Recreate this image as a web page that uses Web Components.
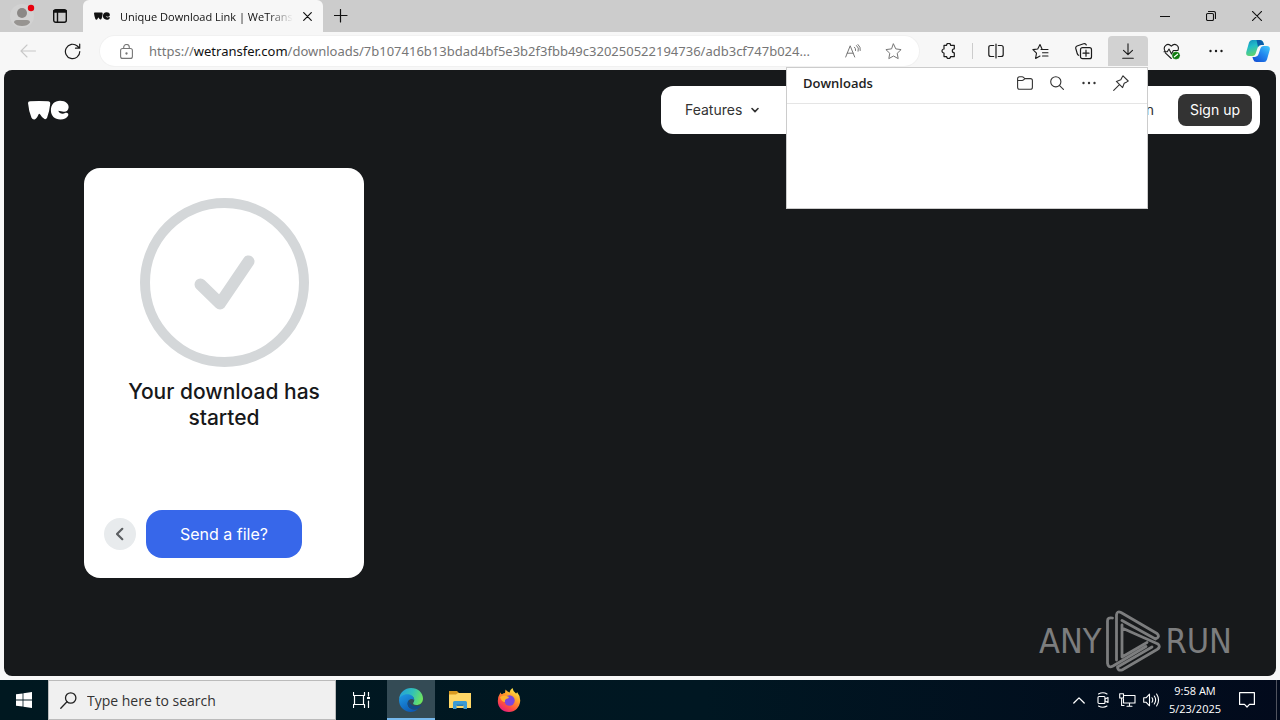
<!DOCTYPE html>
<html lang="en">
<head>
<meta charset="utf-8">
<title>Unique Download Link | WeTransfer</title>
<style>
  html, body { margin: 0; height: 100%; }
  body { font-family: "Open Sans", "Noto Sans", sans-serif; color: #1b1b1b; overflow: hidden; }
</style>
</head>
<body>
<desk-top>
  <tab-strip slot="tabs">Unique Download Link | WeTransfer</tab-strip>
  <tool-bar slot="toolbar"><downloads-panel>Downloads</downloads-panel></tool-bar>
  <web-page slot="page">
    <site-nav slot="nav"></site-nav>
    <download-card>Your download has started</download-card>
    <any-run slot="watermark"></any-run>
  </web-page>
  <task-bar slot="taskbar"></task-bar>
</desk-top>

<script>
const define = (name, html) => customElements.define(name, class extends HTMLElement {
  constructor() {
    super();
    const t = document.createElement('template');
    t.innerHTML = html;
    this.attachShadow({ mode: 'open' }).append(t.content.cloneNode(true));
  }
});

const line = (w, h, body, sw = 1) =>
  `<svg width="${w}" height="${h}" viewBox="0 0 ${w} ${h}" fill="none" stroke="currentColor" stroke-width="${sw}" stroke-linecap="round" stroke-linejoin="round" aria-hidden="true">${body}</svg>`;
const fill = (w, h, body, box) =>
  `<svg width="${w}" height="${h}" viewBox="${box || `0 0 ${w} ${h}`}" fill="currentColor" aria-hidden="true">${body}</svg>`;
const weLogo = '<path d="M0 2.5Q0 .8 2 .8Q11 0 20 .8Q22.500 1 22.200 3.500Q21.500 11 19 17.500Q18 19 16.500 18.500Q14 17.300 12 13.800Q11.200 12.900 10.500 13.900Q8.500 18.500 6.500 18.900Q4.500 19.200 3.500 17.200Q.8 11 0 2.500Z"/><path d="M32 .2C38 .2 41 3.700 40.600 7C40.400 10 38 11.600 35.500 11.200L30.300 10.200C31 12.800 34.500 14 37 12.600C39 11.700 41 13 40.200 15C39 17.500 36 19 32.500 19C26.500 19 22.900 15 22.900 9.700C22.900 4 26.500 .2 32 .2Z"/>';
const star = 'M8.500 1L10.800 5.900L16.100 6.600L12.200 10.300L13.200 15.600L8.500 13L3.800 15.600L4.800 10.300L.9 6.600L6.200 5.900Z';

const ICONS = {
  avatar: fill(26, 28, '<circle cx="12" cy="14" r="12" fill="#d2d2d2"/><circle cx="12" cy="11" r="5" fill="#8b8886"/><path d="M4 20.500Q4 18 7 18H17Q20 18 20 20.500Q17.500 24 12 24T4 20.500Z" fill="#979491"/><circle cx="21" cy="6" r="3.200" fill="#e8000d"/>'),
  workspaces: line(14, 14, '<rect x=".7" y=".7" width="12.600" height="12.600" rx="2"/><path d="M.7 3H13.300M4.500 3.500V13" /><path d="M1 2H13" stroke-width="2"/>', 1.4),
  we: fill(16, 8, weLogo, '0 0 41 19'),
  logo: fill(41, 20, weLogo, '0 0 41 19'),
  close: line(9, 9, '<path d="M.7 .7L8.300 8.300M8.300 .7L.7 8.300"/>', 1.2),
  plus: line(14, 14, '<path d="M6.500 .5V13M.5 6.500H13"/>', 1.2),
  min: line(10, 10, '<path d="M0 5.500H10"/>'),
  restore: line(10, 10, '<rect x=".5" y="2.500" width="7" height="7" rx="1.200"/><path d="M2.500 .5H7.500Q9.500 .5 9.500 2.500V7.500"/>', 1.1),
  closewin: line(10, 10, '<path d="M.3 .3L9.700 9.700M9.700 .3L.3 9.700"/>', 1.1),
  back: line(16, 14, '<path d="M15.500 7H1M7 1L1 7L7 13"/>', 1.1),
  refresh: line(17, 17, '<path d="M15.800 8.500A7.200 7.200 0 1 1 13.300 3L15.700 5.200M15.700 1V5.200H11.500"/>', 1.2),
  lock: line(13, 15, '<rect x=".6" y="4.500" width="11.800" height="9.900" rx="2"/><path d="M3.700 4.500V3.300A2.800 2.800 0 0 1 9.300 3.300V4.500"/><circle cx="6.500" cy="9.500" r=".6" fill="currentColor"/>', 1.1),
  read: line(16, 14, '<path d="M.7 13L5.200 1.800L9.700 13M2.200 9.200H8.200M9.500 3.200Q11 4.500 10.600 6.500M11.500 1.500Q14.500 3.800 13.200 7.200M13 .5Q16 3 15.300 6.500"/>'),
  star: line(17, 17, `<path d="${star}"/>`),
  puzzle: line(16, 16, '<path d="M4 2.300H5.600A2 2 0 0 1 9.600 2.300H13.300V5.800A2 2 0 0 0 13.300 9.800V13.600H9.600A2 2 0 0 1 5.600 13.600H3V10A2 2 0 0 1 3 6V2.300Z"/>', 1.2),
  split: line(16, 16, '<path d="M5.700 2.500H2.800Q.8 2.500 .8 4.500V11.500Q.8 13.500 2.800 13.500H5.700M10.300 2.500H13.200Q15.200 2.500 15.200 4.500V11.500Q15.200 13.500 13.200 13.500H10.300M8 1V15"/>', 1.2),
  favs: line(17, 17, '<path d="M10 6L8 1.500L5.700 6L.9 6.600L4.500 10.200L3.600 15.400L8 13M9 6.500H16M10.500 9.700H16M10.500 13H16"/>', 1.1),
  collections: line(18, 17, '<rect x="5.500" y="4.700" width="11" height="11" rx="2"/><path d="M11 7.200V13.200M8 10.200H14M3.700 12.300Q2.700 12 2.300 10.800L.8 5.500Q.4 3.700 2 3L8.600 .8Q10.600 .2 11.300 2"/>', 1.2),
  download: line(12, 16, '<path d="M6 .7V11.500M1.500 7.300L6 11.700L10.500 7.300M.7 15.200H11.300"/>', 1.1),
  heart: line(18, 17, '<path d="M2 8C-.5 3.500 4.500-1 8.300 3.200C12-1 17 3.200 14.800 7.500M2.300 9.800L8.300 15.500M1 8.800H4.300L6 6L8.500 11L10.300 7.500H15"/><circle cx="13" cy="12.500" r="3.600" fill="#107c10" stroke="#107c10" stroke-width=".6"/><path d="M11.400 13.800L14.600 11.200" stroke="#fff" stroke-width="1.100"/>', 1.1),
  more: fill(14, 4, '<circle cx="1.500" cy="2" r="1.200"/><circle cx="7" cy="2" r="1.200"/><circle cx="12.500" cy="2" r="1.200"/>'),
  copilot: fill(24, 22, '<defs><linearGradient id="a" x1="0" y1="0" x2=".4" y2="1"><stop stop-color="#128bbd"/><stop offset=".45" stop-color="#22bdc8"/><stop offset="1" stop-color="#64d568"/></linearGradient><linearGradient id="b" x1="1" y1="0" x2=".2" y2="1"><stop stop-color="#43cdfb"/><stop offset=".5" stop-color="#2389ef"/><stop offset="1" stop-color="#1453d6"/></linearGradient></defs><path fill="url(#a)" d="M6 0H14Q16.500 0 17.300 2.500L18 5H15Q12.500 5 11.600 7.800L9.500 14Q8.700 16 6.500 16H3Q-.5 16 .3 12L3 2.500Q3.800 0 6 0Z"/><path fill="url(#b)" d="M18 22H10.500Q8 22 7.200 19.500L6.400 17H9Q11.500 17 12.500 14.200L14.600 8Q15.400 6 17.600 6H21Q24.500 6 23.700 10L21 19.500Q20.200 22 18 22Z"/><path fill="#0a5ca8" d="M14 0Q16.500 0 17.300 2.500L18 5H15Q13 5 12 7L10.500 0Z"/>'),
  folder: line(16, 14, '<path d="M.6 3Q.6 .8 2.600 .8H5Q6 .8 6.800 1.600L8 2.600H13.400Q15.400 2.600 15.400 4.600V11.200Q15.400 13.300 13.400 13.300H2.600Q.6 13.300 .6 11.200ZM.8 4.500H5Q6 4.500 6.800 3.700L8 2.600"/>', 1.1),
  search: line(14, 14, '<circle cx="5.800" cy="5.800" r="5.100"/><path d="M9.600 9.600L13.400 13.400"/>', 1.1),
  pin: line(16, 16, '<path d="M10 .8L15.200 6L13.800 6.900L11.200 8.200L9.600 12.600L3.400 6.400L7.800 4.800L9.100 2.200ZM6.200 9.800L.7 15.300"/>', 1.1),
  chev: line(8, 6, '<path d="M1 1.500L4 4.600L7 1.500"/>', 1.6),
  check: fill(169, 169, '<circle cx="84.500" cy="84.500" r="79.500" fill="none" stroke="#d4d7d9" stroke-width="10"/><path d="M60.500 86.500L80 105.500L108.500 63.500" fill="none" stroke="#d4d7d9" stroke-width="12" stroke-linecap="round" stroke-linejoin="round"/>'),
  left: line(11, 14, '<path d="M7.300 1.800L2 7L7.300 12.200"/>', 2.2),
  play: line(56, 62, '<path d="M7.500 8Q2.500 7 2.500 11V53Q3 58.500 8 56L41 36.500M11.500 50V5Q12 .5 16 2.500L52 23.500Q55.500 27 50.500 29L17 10.500M17 15V47L42 32.500M17 18L53 34Q56 37 52 39.500L17 60Q12.500 61 12.500 57L47 37"/>', 2.8),
  windows: fill(16, 16, '<path d="M0 2.300L6.600 1.400V7.600H0ZM7.400 1.300L16 0V7.600H7.400ZM0 8.400H6.600V14.600L0 13.700ZM7.400 8.400H16V16L7.400 14.700Z"/>'),
  tasksearch: line(17, 17, '<circle cx="10.700" cy="6" r="5.200"/><path d="M7 9.800L.8 16.200"/>', 1.3),
  taskview: line(17, 16, '<path d="M.5 .5V3.500H11.500V.5M.5 15.500V12.500H11.500V15.500M1.500 4V12.500M10.500 4V12.500M15.500 .5V4M15.500 9V15.500"/><path d="M15.500 5V7" stroke-width="3" stroke-linecap="butt"/>', 1.2),
  edge: fill(24, 24, '<defs><linearGradient id="c" x1="0" y1=".3" x2="1" y2=".6"><stop stop-color="#249fdc"/><stop offset=".5" stop-color="#31c0b8"/><stop offset="1" stop-color="#70e65b"/></linearGradient><linearGradient id="d" x1="0" y1="0" x2=".6" y2="1"><stop stop-color="#1f9ae5"/><stop offset="1" stop-color="#0d5ab5"/></linearGradient></defs><path fill="url(#c)" d="M0 11C1 4 6 0 12 0C19 0 24 4.800 24 10.500C24 15 20.500 17 17.500 17C14.500 17 13.700 15.700 14.300 14.800C16.500 12 15 8 10.500 7.500C5.500 7 1.500 9 0 11Z"/><path fill="url(#d)" d="M0 12C.3 8 5 5.700 9.500 6.200C13 6.600 15.500 9.500 15 12C13 9.800 8.500 11.500 8.500 15.500C8.500 20 13.500 23 19 21C15 25 8.500 25 4 21C1 18.500 0 15 0 12Z"/><path fill="#114a8b" d="M9.800 12.200C7 16 10 21.500 16 21.200Q20 21 22.300 17.500Q22.500 17 21.800 17.300C17 19.600 10.500 18 9.800 12.200Z"/>'),
  explorer: fill(22, 18, '<path fill="#d99a20" d="M0 0H8L10 2H21V8H0Z"/><path fill="#ffd766" d="M0 3.500H7L9 2H22V17H0Z"/><path fill="#3b9bd4" d="M4 18V11.500Q4 10 5.500 10H16.500Q18 10 18 11.500V18H14.500V14H7.500V18Z"/><path fill="#2a7db5" d="M7.500 13.500H14.500V15H7.500Z"/>'),
  firefox: fill(24, 24, '<defs><linearGradient id="e" x1=".8" y1="0" x2=".2" y2="1"><stop stop-color="#fff44f"/><stop offset=".35" stop-color="#ffa52a"/><stop offset=".7" stop-color="#ff4f3e"/><stop offset="1" stop-color="#e31587"/></linearGradient></defs><path fill="url(#e)" d="M3.500 4.500Q4 6 5 6.200Q6.500 5 8 5L8.500 1.500Q10 3.500 12.500 4.500Q13 1.500 15.500 0Q16 3.500 19 5.500Q20 5 20 4Q23.500 8 23.200 13C22.700 19.500 18 24 12 24C5.500 24 .8 19.500 .8 13Q.8 8.500 3.500 4.500Z"/><circle cx="12.500" cy="12.500" r="5.200" fill="#7a46dd"/><path fill="#ffb22c" d="M3 9Q7 6 12 9Q12 10.500 9 11Q7.500 12 8 14Q4.500 14 3 9Z"/>'),
  up: line(12, 7, '<path d="M.8 6L6 .9L11.200 6"/>', 1.3),
  camera: line(12, 16, '<rect x="1" y="4.500" width="7" height="7" rx="1"/><path d="M8 7L11 5.500V10.500L8 9M1.500 2Q6-.5 10 2M1.500 14Q6 16.500 10 14"/>', 1.1),
  network: line(17, 14, '<path d="M5.500 2.500H16V10H4.500V6M8 13.300H13M10.500 10V13M.7 .7H4.500V5H.7ZM2.600 5V12.500H5"/>', 1.1),
  volume: line(17, 14, '<path d="M.7 4.800H3L6.500 1.200V12.800L3 9.200H.7ZM9 4.800Q10.500 7 9 9.200M11.300 3Q14 7 11.300 11M13.600 1Q17.500 7 13.600 13"/>', 1.1),
  notice: line(16, 16, '<path d="M.6 .6H15.400V12.400H10.500L8 15L5.500 12.400H.6Z"/>', 1.2)
};

customElements.define('ui-icon', class extends HTMLElement {
  constructor() { super(); this.attachShadow({ mode: 'open' }); }
  connectedCallback() {
    this.shadowRoot.innerHTML = `<style>:host{display:inline-flex;flex:none}svg{display:block}</style>${ICONS[this.getAttribute('name')] || ''}`;
  }
});

const RESET = 'button,input,a{font:inherit;color:inherit;margin:0;padding:0;border:0;background:none;text-decoration:none}button{display:flex;align-items:center;justify-content:center}input:focus{outline:none}';

define('desk-top', `<style>
  :host{display:flex;flex-direction:column;height:100vh;min-height:480px;background:#f7f7f7}
  ::slotted([slot=page]){flex:1;min-height:0;margin:0 4px 4px}
</style>
<slot name="tabs"></slot><slot name="toolbar"></slot><slot name="page"></slot><slot name="taskbar"></slot>`);

define('tab-strip', `<style>${RESET}
  :host{display:flex;height:32px;flex:none;background:#ccc;font-size:11px;color:#111}
  .side{display:flex;align-items:center;width:83px;box-sizing:border-box;padding-left:10px;gap:17px}
  .tab{display:flex;align-items:center;box-sizing:border-box;width:240px;background:#f7f7f7;border-radius:6px 6px 0 0;padding:0 6px 0 11px}
  .title{flex:1;min-width:0;margin:0 4px 0 10px;overflow:hidden;white-space:nowrap;-webkit-mask-image:linear-gradient(to right,#000 85%,transparent);mask-image:linear-gradient(to right,#000 85%,transparent)}
  .tab button{width:20px;height:20px}
  .new{width:36px}
  .win{display:flex;margin-left:auto}
  .win button{width:46px}
</style>
<div class="side"><button aria-label="Profile"><ui-icon name="avatar"></ui-icon></button><button aria-label="Workspaces"><ui-icon name="workspaces"></ui-icon></button></div>
<div class="tab"><ui-icon name="we"></ui-icon><span class="title"><slot></slot></span><button aria-label="Close tab"><ui-icon name="close"></ui-icon></button></div>
<button class="new" aria-label="New tab"><ui-icon name="plus"></ui-icon></button>
<div class="win"><button aria-label="Minimize"><ui-icon name="min"></ui-icon></button><button aria-label="Restore"><ui-icon name="restore"></ui-icon></button><button aria-label="Close"><ui-icon name="closewin"></ui-icon></button></div>`);

define('tool-bar', `<style>${RESET}
  :host{display:flex;align-items:center;height:38px;flex:none;box-sizing:border-box;padding:0 4px 0 8px;gap:4px;position:relative;z-index:2;background:#f7f7f7}
  button{width:40px;height:30px;flex:none;border-radius:4px}
  .off{color:#c8c8c8}
  .address{display:flex;align-items:center;flex:1;min-width:0;height:30px;margin:0 6px 0 4px;border-radius:15px;background:#fff;box-shadow:0 0 0 1px #f1f1f1;color:#767676;padding:0 6px 0 20px;box-sizing:border-box}
  .field{display:grid;flex:1;min-width:0;margin-left:16px;font:13px/20px "Noto Sans","Open Sans",sans-serif}
  .field>*{grid-area:1/1;min-width:0}
  .url{overflow:hidden;white-space:nowrap}
  b{font-weight:400;color:#111}
  .sep{width:1px;height:16px;margin:0 -1px;background:#ccc}
  .on{background:#d2d2d2;border-radius:4px 4px 0 0}
  .last{width:36px}
  ::slotted(downloads-panel){position:absolute;top:35px;right:132px}
</style>
<button class="off" aria-label="Back"><ui-icon name="back"></ui-icon></button>
<button aria-label="Refresh"><ui-icon name="refresh"></ui-icon></button>
<div class="address"><ui-icon name="lock"></ui-icon>
  <div class="field"><input id="url" aria-label="Address"><label class="url" for="url">https://<b>wetransfer.com</b>/downloads/7b107416b13bdad4bf5e3b2f3fbb49c320250522194736/adb3cf747b024...</label></div>
  <button aria-label="Read aloud"><ui-icon name="read"></ui-icon></button><button aria-label="Add to favorites"><ui-icon name="star"></ui-icon></button></div>
<button aria-label="Extensions"><ui-icon name="puzzle"></ui-icon></button><span class="sep"></span>
<button aria-label="Split screen"><ui-icon name="split"></ui-icon></button>
<button aria-label="Favorites"><ui-icon name="favs"></ui-icon></button>
<button aria-label="Collections"><ui-icon name="collections"></ui-icon></button>
<button class="on" aria-label="Downloads"><ui-icon name="download"></ui-icon></button>
<button aria-label="Browser essentials"><ui-icon name="heart"></ui-icon></button>
<button aria-label="Settings and more"><ui-icon name="more"></ui-icon></button>
<button class="last" aria-label="Copilot"><ui-icon name="copilot"></ui-icon></button>
<slot></slot>`);

define('downloads-panel', `<style>${RESET}
  :host{display:block;box-sizing:border-box;width:362px;height:142px;background:#fff;border:1px solid #ccc}
  header{display:flex;align-items:center;box-sizing:border-box;height:36px;padding:0 10px 6px 16px;border-bottom:1px solid #e5e5e5;color:#333}
  h2{flex:1;margin:0;font-size:13px;line-height:20px;font-weight:600;color:#222}
  button{width:32px;height:28px}
</style>
<header><h2><slot></slot></h2><button aria-label="Open downloads folder"><ui-icon name="folder"></ui-icon></button><button aria-label="Search downloads"><ui-icon name="search"></ui-icon></button><button aria-label="More options"><ui-icon name="more"></ui-icon></button><button aria-label="Pin downloads"><ui-icon name="pin"></ui-icon></button></header>`);

define('web-page', `<style>
  :host{display:flex;flex-direction:column;position:relative;background:#17191b;border-radius:8px;overflow:hidden;font-family:Inter,"Liberation Sans",sans-serif}
  header{display:flex;align-items:center;justify-content:space-between;padding:16px 16px 0 24px;color:#fff}
  main{padding:34px 80px}
  ::slotted(any-run){position:absolute;right:44px;bottom:4px}
</style>
<header><ui-icon name="logo" role="img" aria-label="WeTransfer"></ui-icon><slot name="nav"></slot></header>
<main><slot></slot></main><slot name="watermark"></slot>`);

define('site-nav', `<style>${RESET}
  :host{display:block;flex:0 1 599px}
  nav{display:flex;align-items:center;height:48px;box-sizing:border-box;padding:0 8px 0 24px;background:#fff;border-radius:12px;color:#333;font-size:14px;line-height:20px}
  .features{gap:9px;margin-right:auto}
  .sign{display:flex;align-items:center;height:32px;padding:0 12px;margin-left:24px;border-radius:8px;background:#333;color:#fff}
</style>
<nav><button class="features">Features <ui-icon name="chev"></ui-icon></button><a href="#login">Log in</a><a class="sign" href="#signup">Sign up</a></nav>`);

define('download-card', `<style>${RESET}
  :host{display:flex;flex-direction:column;box-sizing:border-box;width:280px;min-height:410px;padding:30px 20px 20px;background:#fff;border-radius:16px;color:#17181a}
  ui-icon[name=check]{align-self:center}
  h1{margin:12px 0 0;text-align:center;font-size:21px;line-height:26px;font-weight:500}
  .actions{display:flex;align-items:center;gap:10px;margin-top:auto}
  .back{width:32px;height:32px;border-radius:50%;background:#e8ebed;color:#5c5f62}
  .send{display:flex;align-items:center;justify-content:center;width:156px;height:48px;border-radius:16px;background:#3767ea;color:#fff;font-size:16px}
</style>
<ui-icon name="check"></ui-icon><h1><slot></slot></h1>
<div class="actions"><button class="back" aria-label="Back"><ui-icon name="left"></ui-icon></button><a class="send" href="#send">Send a file?</a></div>`);

define('any-run', `<style>
  :host{display:flex;align-items:center;gap:4px;color:#7c7d7e;font:34px/48px "Liberation Sans Narrow","DejaVu Sans Condensed",sans-serif}
</style>
<span>ANY</span><ui-icon name="play"></ui-icon><span>RUN</span>`);

define('task-bar', `<style>${RESET}
  :host{display:flex;height:40px;flex:none;background:linear-gradient(to right,#001820,#001722 55%,#020a1c);color:#fff}
  button{width:48px;height:40px;flex:none}
  .search{display:flex;align-items:center;gap:10px;box-sizing:border-box;width:288px;padding-left:11px;background:#f0f0f0;border:1px solid #bbb;color:#222;font-size:14px}
  input{flex:1;min-width:0}
  input::placeholder{color:#333;opacity:1}
  .apps{display:flex;gap:1px}
  .view{width:50px}
  .active{background:#344b55;box-shadow:inset 0 -2px #76b9ed}
  .tray{display:flex;margin-left:auto;padding-right:9px;border-right:1px solid #50535e;margin-right:3px}
  .tray button{width:24px}
  .tray .clock{width:64px;flex-direction:column;font-size:11px;line-height:18px}
  .tray .notice{width:40px}
</style>
<button aria-label="Start"><ui-icon name="windows"></ui-icon></button>
<label class="search"><ui-icon name="tasksearch"></ui-icon><input placeholder="Type here to search" aria-label="Search"></label>
<div class="apps"><button class="view" aria-label="Task view"><ui-icon name="taskview"></ui-icon></button><button class="active" aria-label="Microsoft Edge"><ui-icon name="edge"></ui-icon></button><button aria-label="File Explorer"><ui-icon name="explorer"></ui-icon></button><button aria-label="Firefox"><ui-icon name="firefox"></ui-icon></button></div>
<div class="tray"><button aria-label="Show hidden icons"><ui-icon name="up"></ui-icon></button><button aria-label="Meet now"><ui-icon name="camera"></ui-icon></button><button aria-label="Network"><ui-icon name="network"></ui-icon></button><button aria-label="Volume"><ui-icon name="volume"></ui-icon></button><button class="clock"><span>9:58 AM</span><span>5/23/2025</span></button><button class="notice" aria-label="Notifications"><ui-icon name="notice"></ui-icon></button></div>`);
</script>
</body>
</html>
